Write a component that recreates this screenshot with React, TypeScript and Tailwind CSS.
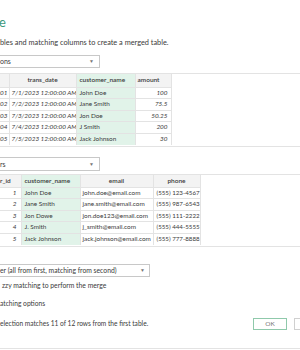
import React from "react";

const t1 = [
  ["01", "7/1/2023 12:00:00 AM", "John Doe", "100"],
  ["02", "7/2/2023 12:00:00 AM", "Jane Smith", "75.5"],
  ["03", "7/3/2023 12:00:00 AM", "Jon Doe", "50.25"],
  ["04", "7/4/2023 12:00:00 AM", "J Smith", "200"],
  ["05", "7/5/2023 12:00:00 AM", "Jack Johnson", "30"],
];

const t2 = [
  ["1", "John Doe", "john.doe@email.com", "(555) 123-4567"],
  ["2", "Jane Smith", "jane.smith@email.com", "(555) 987-6543"],
  ["3", "Jon Dowe", "jon.doe123@email.com", "(555) 111-2222"],
  ["4", "J. Smith", "j_smith@email.com", "(555) 444-5555"],
  ["5", "Jack Johnson", "jack.johnson@email.com", "(555) 777-8888"],
];

function Caret() {
  return <span className="text-[5px] text-[#777] leading-none">▼</span>;
}

const bd = "border-r border-[#e3e3e3] p-0 overflow-hidden whitespace-nowrap";

export default function App() {
  return (
    <div className="w-[300px] h-[350px] overflow-hidden bg-white text-[#3a3a3a] font-['Lato',sans-serif] flex flex-col">
      <div className="h-[15px]" />
      <div className="h-[14px] leading-[14px] text-[13px] text-[#3d9a7c] -ml-[1px]">e</div>
      <div className="h-[9px]" />
      <div className="h-[10px] leading-[10px] text-[7.35px] whitespace-nowrap">bles and matching columns to create a merged table.</div>
      <div className="h-[7px]" />
      <div className="w-[100px] h-[13px] border border-[#c8c8c8] border-l-0 flex items-center justify-between pr-[5px] text-[7px]">
        <span>ons</span>
        <Caret />
      </div>
      <div className="h-[5px]" />
      <div className="border-y border-[#e3e3e3] h-[74px]">
        <table className="border-collapse table-fixed w-[171px] leading-none">
          <colgroup>
            <col className="w-[9px]" />
            <col className="w-[67px]" />
            <col className="w-[59px]" />
            <col className="w-[36px]" />
          </colgroup>
          <thead>
            <tr className="h-[13px] bg-[#f3f3f3] text-[6.5px]">
              <th className={bd}></th>
              <th className={`${bd} font-semibold text-center`}>trans_date</th>
              <th className={`${bd} bg-[#e1f3e9] font-semibold text-left pl-[3px]`}>customer_name</th>
              <th className={`${bd} font-semibold text-left pl-[2px]`}>amount</th>
            </tr>
          </thead>
          <tbody>
            {t1.map((r) => (
              <tr key={r[0]} className="h-[11.5px] border-t border-[#e3e3e3] text-[6.4px]">
                <td className={`${bd} italic text-right pr-[1px]`}>{r[0]}</td>
                <td className={`${bd} italic pl-[2px]`}>{r[1]}</td>
                <td className={`${bd} bg-[#e1f3e9] pl-[3px]`}>{r[2]}</td>
                <td className={`${bd} italic text-right pr-[3px]`}>{r[3]}</td>
              </tr>
            ))}
          </tbody>
        </table>
      </div>
      <div className="h-[10px]" />
      <div className="w-[100px] h-[14px] border border-[#c8c8c8] border-l-0 flex items-center justify-between pr-[5px] text-[7px]">
        <span>rs</span>
        <Caret />
      </div>
      <div className="h-[3px]" />
      <div className="border-y border-[#e3e3e3] h-[73px]">
        <table className="border-collapse table-fixed w-[200px] leading-none">
          <colgroup>
            <col className="w-[21px]" />
            <col className="w-[59px]" />
            <col className="w-[73px]" />
            <col className="w-[47px]" />
          </colgroup>
          <thead>
            <tr className="h-[12px] bg-[#f3f3f3] text-[6.5px]">
              <th className={`${bd} font-semibold text-right pr-[11px]`}>r_id</th>
              <th className={`${bd} bg-[#e1f3e9] font-semibold text-left pl-[3px]`}>customer_name</th>
              <th className={`${bd} font-semibold text-center`}>email</th>
              <th className={`${bd} font-semibold text-center`}>phone</th>
            </tr>
          </thead>
          <tbody>
            {t2.map((r) => (
              <tr key={r[0]} className="h-[11.6px] border-t border-[#e3e3e3] text-[6.4px]">
                <td className={`${bd} italic text-right pr-[4px]`}>{r[0]}</td>
                <td className={`${bd} bg-[#e1f3e9] pl-[3px]`}>{r[1]}</td>
                <td className={`${bd} pl-[2px]`}>{r[2]}</td>
                <td className={`${bd} pl-[3px] text-[6.2px]`}>{r[3]}</td>
              </tr>
            ))}
          </tbody>
        </table>
      </div>
      <div className="h-[17px]" />
      <div className="w-[150px] h-[13px] border border-[#c8c8c8] border-l-0 flex items-center justify-between pr-[4px] text-[6.8px] whitespace-nowrap">
        <span>er (all from first, matching from second)</span>
        <Caret />
      </div>
      <div className="h-[3px]" />
      <div className="h-[10px] leading-[10px] text-[6.8px] pl-[2px] whitespace-nowrap">zzy matching to perform the merge</div>
      <div className="h-[8px]" />
      <div className="h-[10px] leading-[10px] text-[6.7px] whitespace-nowrap">atching options</div>
      <div className="h-[9px]" />
      <div className="h-[14px] flex items-center justify-between">
        <span className="text-[6.6px] whitespace-nowrap">election matches 11 of 12 rows from the first table.</span>
        <div className="flex gap-[7px] items-center">
          <button className="w-[34px] h-[12px] border border-[#8fc9ab] text-[6.5px] text-[#777] leading-none">OK</button>
          <button className="w-[6px] h-[12px] border border-[#d0d0d0] border-r-0"></button>
        </div>
      </div>
      <div className="flex-1" />
      <div className="h-[2px] border-t border-[#e3e3e3]" />
    </div>
  );
}
